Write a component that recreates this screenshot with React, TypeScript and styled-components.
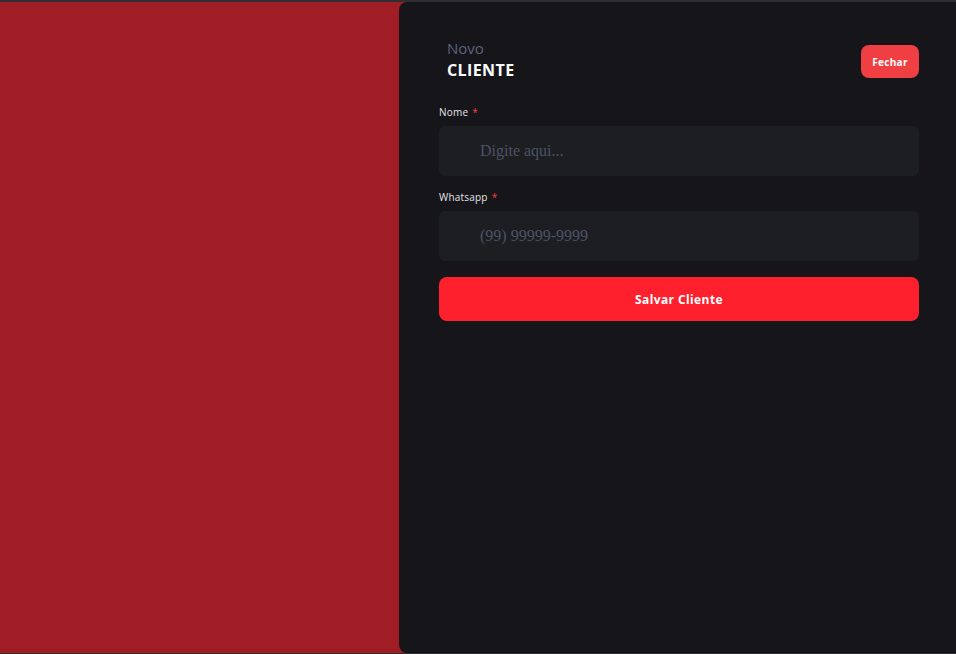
import React from "react";
import styled, { createGlobalStyle } from "styled-components";

const Global = createGlobalStyle`
  html, body { margin: 0; padding: 0; height: 100%; background: #2f2f33; }
  #root { height: 100%; }
  * { box-sizing: border-box; }
`;

const Screen = styled.div`
  height: 654px;
  padding-top: 2px;
  padding-bottom: 1px;
  display: flex;
  flex-direction: column;
`;

const Overlay = styled.div`
  flex: 1;
  display: flex;
  justify-content: flex-end;
  background: #a11d26;
`;

const Panel = styled.aside`
  width: 557px;
  height: 100%;
  background: #16161a;
  border-radius: 8px 0 0 8px;
  padding: 36px 37px 0 40px;
  display: flex;
  flex-direction: column;
  font-family: "Open Sans", "Lato", sans-serif;
`;

const Header = styled.header`
  display: flex;
  justify-content: space-between;
  align-items: flex-end;
  padding-left: 8px;
  margin-bottom: 24px;
`;

const TitleBlock = styled.div`
  display: flex;
  flex-direction: column;
`;

const Subtitle = styled.span`
  font-size: 15px;
  line-height: 21px;
  color: #5b6379;
`;

const Title = styled.span`
  font-size: 16px;
  line-height: 22px;
  font-weight: 700;
  color: #ffffff;
  letter-spacing: 0.4px;
`;

const CloseButton = styled.button`
  width: 58px;
  height: 33px;
  margin-bottom: 3px;
  border: none;
  border-radius: 8px;
  background: #ef3f43;
  color: #fff;
  font-family: inherit;
  font-weight: 700;
  font-size: 10px;
  letter-spacing: 0.3px;
  padding: 0;
`;

const Form = styled.form`
  display: flex;
  flex-direction: column;
  gap: 14px;
`;

const Field = styled.label`
  display: flex;
  flex-direction: column;
`;

const Label = styled.span`
  font-size: 10px;
  line-height: 14px;
  color: #e4e4e7;
  margin-bottom: 7px;
  letter-spacing: 0.2px;
`;

const Required = styled.span`
  color: #ef3f43;
  margin-left: 4px;
`;

const Input = styled.input`
  height: 50px;
  border: none;
  outline: none;
  border-radius: 6px;
  background: #1d1e22;
  padding-left: 41px;
  font-family: serif;
  font-size: 16px;
  color: #fff;
  &::placeholder { color: #4b5366; }
`;

const SaveButton = styled.button`
  margin-top: 2px;
  height: 44px;
  border: none;
  border-radius: 8px;
  background: #ff202d;
  color: #fff;
  font-family: inherit;
  font-weight: 700;
  font-size: 12px;
  letter-spacing: 0.4px;
`;

export default function App() {
  return (
    <>
      <Global />
      <Screen>
        <Overlay>
          <Panel>
            <Header>
              <TitleBlock>
                <Subtitle>Novo</Subtitle>
                <Title>CLIENTE</Title>
              </TitleBlock>
              <CloseButton type="button">Fechar</CloseButton>
            </Header>
            <Form onSubmit={(e) => e.preventDefault()}>
              <Field>
                <Label>
                  Nome<Required>*</Required>
                </Label>
                <Input placeholder="Digite aqui..." />
              </Field>
              <Field>
                <Label>
                  Whatsapp<Required>*</Required>
                </Label>
                <Input placeholder="(99) 99999-9999" />
              </Field>
              <SaveButton type="submit">Salvar Cliente</SaveButton>
            </Form>
          </Panel>
        </Overlay>
      </Screen>
    </>
  );
}
